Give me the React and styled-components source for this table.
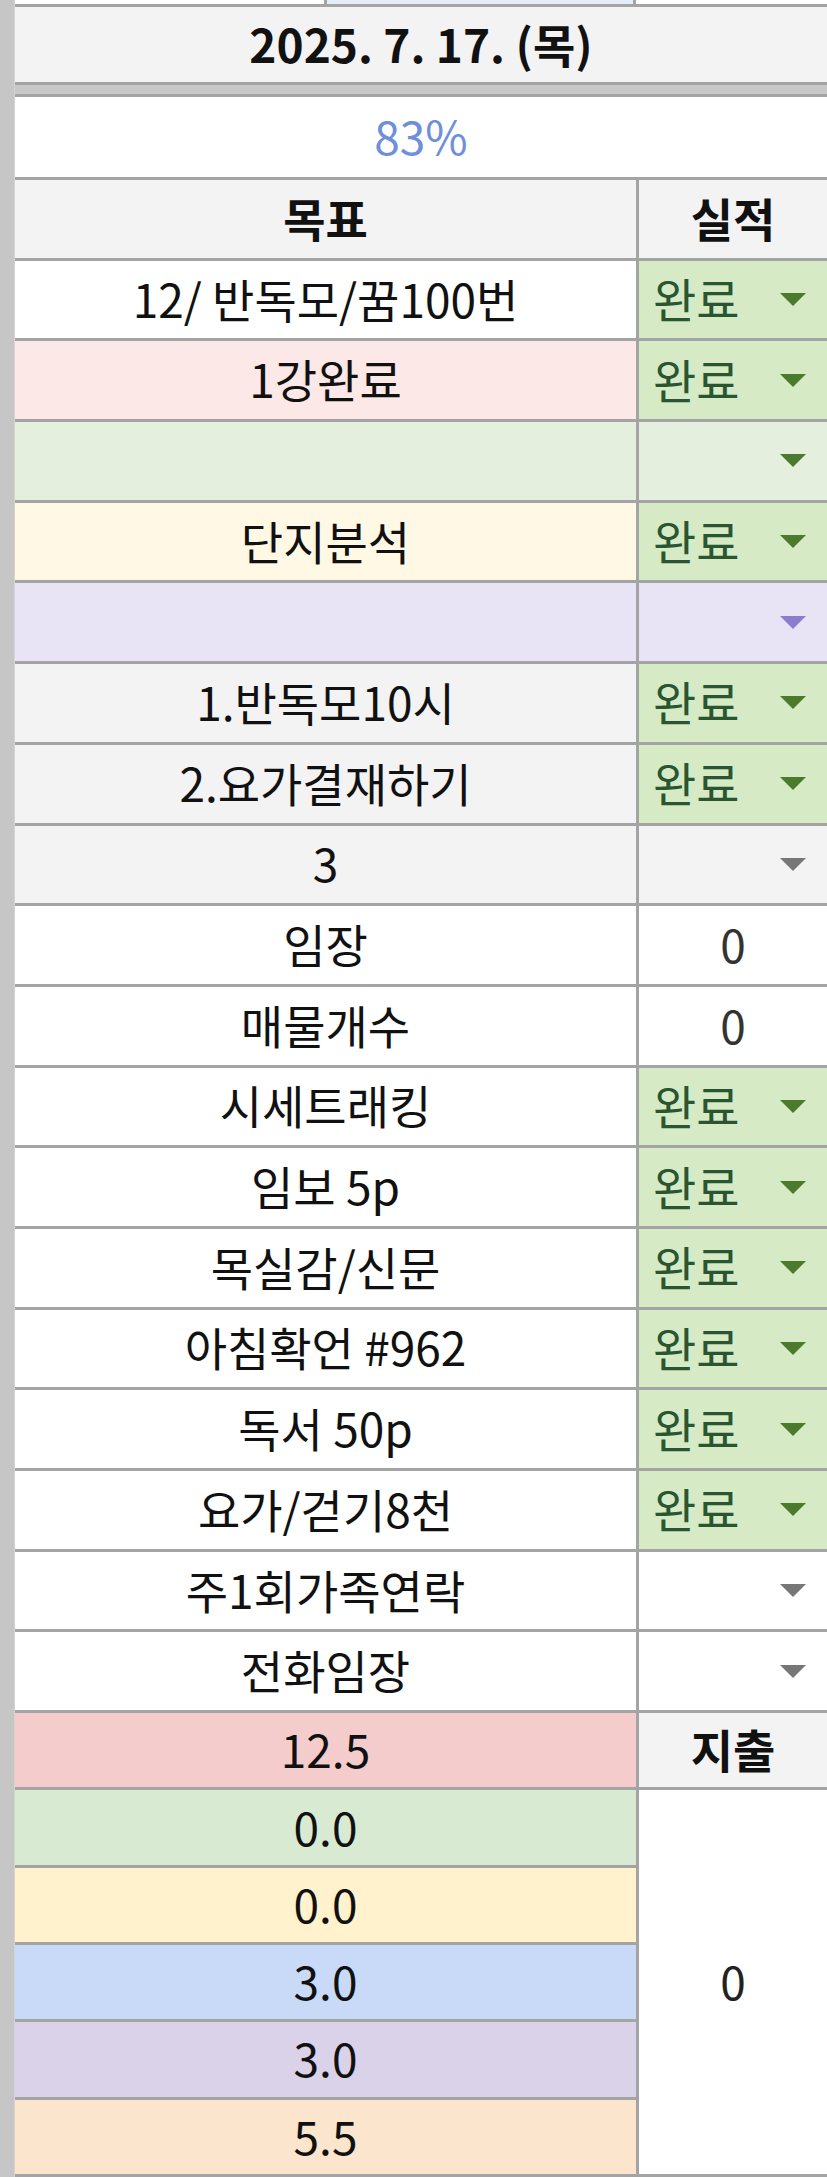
import React from "react";
import styled, { createGlobalStyle } from "styled-components";

const GlobalStyle = createGlobalStyle`
  html, body {
    margin: 0;
    padding: 0;
    background: #ffffff;
  }
  body {
    font-family: "Noto Sans CJK KR", "Noto Sans", "Liberation Sans", sans-serif;
    color: #111111;
  }
`;

const LINE = "#a4a4a4";

const Page = styled.div`
  display: flex;
  width: 827px;
  overflow: hidden;
`;

const Gutter = styled.div`
  flex: 0 0 15px;
  background: #c6c6c6;
  border-right: 1px solid #d4d4d4;
  box-sizing: border-box;
`;

const Sheet = styled.div`
  flex: 1 1 auto;
  display: grid;
  grid-template-columns: 621px 1fr;
  grid-template-rows: 4px 75px 9px 80px repeat(19, 77.7px) repeat(6, 74.3px);
  gap: 3px;
  padding-bottom: 3px;
  background: ${LINE};
`;

const TopStrip = styled.div`
  grid-column: 1 / -1;
  display: grid;
  grid-template-columns: 309px 306px 1fr;
  gap: 3px;
  background: ${LINE};
`;

const StripPart = styled.div`
  background: ${(p) => p.$bg || "#ffffff"};
`;

const FullRow = styled.div`
  grid-column: 1 / -1;
  display: flex;
  align-items: center;
  justify-content: center;
  padding-bottom: 4px;
  box-sizing: border-box;
  background: ${(p) => p.$bg || "#ffffff"};
  font-size: ${(p) => p.$size || 46}px;
  font-weight: ${(p) => (p.$bold ? 700 : 400)};
  color: ${(p) => p.$color || "#111111"};
  line-height: 1;
`;

const FreezeBand = styled.div`
  grid-column: 1 / -1;
  background: #c8c8c8;
`;

const Cell = styled.div`
  grid-column: ${(p) => p.$col};
  grid-row: ${(p) => (p.$span ? `span ${p.$span}` : "auto")};
  display: flex;
  align-items: center;
  justify-content: center;
  padding-bottom: 4px;
  box-sizing: border-box;
  background: ${(p) => p.$bg || "#ffffff"};
  font-size: 46px;
  font-weight: ${(p) => (p.$bold ? 700 : 400)};
  line-height: 1;
  color: ${(p) => p.$color || "#111111"};
  white-space: nowrap;
  overflow: hidden;
`;

const DropCell = styled.div`
  grid-column: 2;
  display: flex;
  align-items: center;
  justify-content: space-between;
  padding: 0 20px 0 14px;
  background: ${(p) => p.$bg || "#ffffff"};
  font-size: 47px;
  line-height: 1;
  color: #2a5531;
  white-space: nowrap;
`;

const DropText = styled.span`
  display: block;
  margin-bottom: 4px;
`;

const Arrow = styled.svg`
  flex: 0 0 auto;
  display: block;
`;

const Triangle = ({ color }) => (
  <Arrow width="28" height="15" viewBox="0 0 28 15">
    <polygon points="1,1 27,1 14,14" fill={color} />
  </Arrow>
);

const GREEN_CHIP = "#d5eac5";

const rows = [
  { text: "12/ 반독모/꿈100번", left: "#ffffff", right: { kind: "drop", text: "완료", bg: GREEN_CHIP, arrow: "#4b7a2c" } },
  { text: "1강완료", left: "#fce8e6", right: { kind: "drop", text: "완료", bg: GREEN_CHIP, arrow: "#4b7a2c" } },
  { text: "", left: "#e5efdd", right: { kind: "drop", text: "", bg: "#e5efdd", arrow: "#4b7a2c" } },
  { text: "단지분석", left: "#fff8e4", right: { kind: "drop", text: "완료", bg: GREEN_CHIP, arrow: "#4b7a2c" } },
  { text: "", left: "#e8e4f5", right: { kind: "drop", text: "", bg: "#e8e4f5", arrow: "#8b7ccd" } },
  { text: "1.반독모10시", left: "#f3f3f3", right: { kind: "drop", text: "완료", bg: GREEN_CHIP, arrow: "#4b7a2c" } },
  { text: "2.요가결재하기", left: "#f3f3f3", right: { kind: "drop", text: "완료", bg: GREEN_CHIP, arrow: "#4b7a2c" } },
  { text: "3", left: "#f3f3f3", right: { kind: "drop", text: "", bg: "#f3f3f3", arrow: "#777777" } },
  { text: "임장", left: "#ffffff", right: { kind: "value", text: "0" } },
  { text: "매물개수", left: "#ffffff", right: { kind: "value", text: "0" } },
  { text: "시세트래킹", left: "#ffffff", right: { kind: "drop", text: "완료", bg: GREEN_CHIP, arrow: "#4b7a2c" } },
  { text: "임보 5p", left: "#ffffff", right: { kind: "drop", text: "완료", bg: GREEN_CHIP, arrow: "#4b7a2c" } },
  { text: "목실감/신문", left: "#ffffff", right: { kind: "drop", text: "완료", bg: GREEN_CHIP, arrow: "#4b7a2c" } },
  { text: "아침확언 #962", left: "#ffffff", right: { kind: "drop", text: "완료", bg: GREEN_CHIP, arrow: "#4b7a2c" } },
  { text: "독서 50p", left: "#ffffff", right: { kind: "drop", text: "완료", bg: GREEN_CHIP, arrow: "#4b7a2c" } },
  { text: "요가/걷기8천", left: "#ffffff", right: { kind: "drop", text: "완료", bg: GREEN_CHIP, arrow: "#4b7a2c" } },
  { text: "주1회가족연락", left: "#ffffff", right: { kind: "drop", text: "", bg: "#ffffff", arrow: "#777777" } },
  { text: "전화임장", left: "#ffffff", right: { kind: "drop", text: "", bg: "#ffffff", arrow: "#777777" } },
];

const totals = [
  { value: "12.5", bg: "#f4cccc" },
  { value: "0.0", bg: "#d9ead3" },
  { value: "0.0", bg: "#fff2cc" },
  { value: "3.0", bg: "#c9daf8" },
  { value: "3.0", bg: "#d9d2e9" },
  { value: "5.5", bg: "#fce5cd" },
];

export default function App() {
  return (
    <>
      <GlobalStyle />
      <Page>
        <Gutter />
        <Sheet>
          <TopStrip>
            <StripPart />
            <StripPart $bg="#e6edf8" />
            <StripPart />
          </TopStrip>
          <FullRow $bg="#f3f3f3" $bold $size={46}>
            2025. 7. 17. (목)
          </FullRow>
          <FreezeBand />
          <FullRow $bg="#ffffff" $color="#6d8fdc" $size={46}>
            83%
          </FullRow>

          <Cell $col={1} $bg="#f3f3f3" $bold>목표</Cell>
          <Cell $col={2} $bg="#f3f3f3" $bold>실적</Cell>

          {rows.map((r, i) => (
            <React.Fragment key={i}>
              <Cell $col={1} $bg={r.left}>{r.text}</Cell>
              {r.right.kind === "drop" ? (
                <DropCell $bg={r.right.bg}>
                  <DropText>{r.right.text}</DropText>
                  <Triangle color={r.right.arrow} />
                </DropCell>
              ) : (
                <Cell $col={2} $bg="#ffffff" $color="#333333">{r.right.text}</Cell>
              )}
            </React.Fragment>
          ))}

          <Cell $col={1} $bg={totals[0].bg}>{totals[0].value}</Cell>
          <Cell $col={2} $bg="#f3f3f3" $bold>지출</Cell>
          <Cell $col={1} $bg={totals[1].bg}>{totals[1].value}</Cell>
          <Cell $col={2} $span={5} $bg="#ffffff" $color="#222222">0</Cell>
          {totals.slice(2).map((t, i) => (
            <Cell key={i} $col={1} $bg={t.bg}>{t.value}</Cell>
          ))}
        </Sheet>
      </Page>
    </>
  );
}
